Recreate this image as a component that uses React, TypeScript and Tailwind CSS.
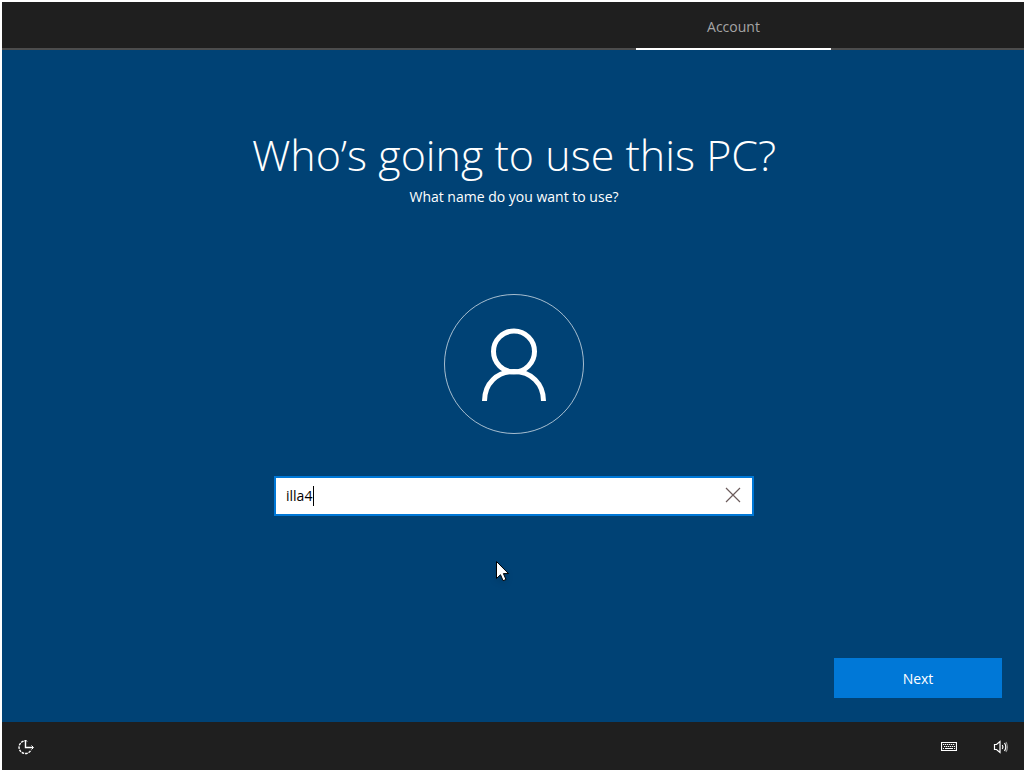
import { useState } from 'react';

function PersonIcon() {
    return (
        <svg className="w-[140px] h-[140px]" viewBox="0 0 140 140" fill="none" stroke="#fff" aria-hidden="true">
            <circle cx="70" cy="70" r="69.5" strokeWidth="1" strokeOpacity="0.65" />
            <circle cx="70" cy="57.5" r="20.5" strokeWidth="5" />
            <path d="M40.5 107C40.5 89.5 53 77.5 70 77.5S99.500 89.500 99.500 107" strokeWidth="5" />
        </svg>
    );
}

function EaseOfAccessIcon() {
    return (
        <svg className="w-[18px] h-[18px]" viewBox="0 0 18 18" fill="none" stroke="#fff" strokeWidth="1.4" aria-hidden="true">
            <path d="M6.500 3.200A6.300 6.300 0 1 0 14 12" strokeDasharray="2.600 0.900" />
            <path d="M8.500 2v7.500H16" />
            <path d="M7 3.500l1.500-1.500 1.500 1.500M14.500 7.500l2 2-2 2" strokeWidth="1" />
        </svg>
    );
}

function KeyboardIcon() {
    return (
        <svg className="w-4 h-4" viewBox="0 0 16 16" fill="none" stroke="#fff" aria-hidden="true">
            <path d="M0.500 3.500h15v8H0.500z" strokeWidth="1.200" />
            <path d="M2 5.500h12M3 7.500h11" strokeDasharray="1.300 0.700" />
            <path d="M2 9.500h1M4 9.500h8M13 9.500h1" />
        </svg>
    );
}

function VolumeIcon() {
    return (
        <svg className="w-4 h-4" viewBox="0 0 16 16" fill="none" stroke="#fff" strokeWidth="1.200" aria-hidden="true">
            <path d="M1.500 5.500h2l3.500-3v11l-3.500-3h-2z" />
            <path d="M9.300 6q1.400 2 0 4M11.500 4q2.600 4 0 8" />
            <path d="M13 3q2.800 5 0 10" strokeOpacity="0.5" />
        </svg>
    );
}

export default function App() {
    const [name, setName] = useState('illa4');

    return (
        <div className="min-h-screen flex flex-col border-y-2 border-l-2 border-white bg-[#004275] text-white font-['Open_Sans','Noto_Sans',sans-serif] text-sm">
            {/* Setup steps */}
            <header className="flex h-12 bg-[#1f1f1f]">
                <div className="flex-1 border-b-2 border-[#4c4c4c]" />
                <nav className="w-[195px] flex border-b-2 border-white">
                    <button className="flex-1 pt-1 text-[#a5a5a5]">Account</button>
                </nav>
                <div className="w-[193px] border-b-2 border-[#4c4c4c]" />
            </header>

            <main className="relative flex-1 flex flex-col items-center pl-[2px]">
                <h1 className="mt-[73px] text-[43px] leading-[64px] font-light">Who’s going to use this PC?</h1>
                <p className="leading-5">What name do you want to use?</p>

                <div className="mt-[87px]">
                    <PersonIcon />
                </div>

                {/* Name field */}
                <div className="relative mt-[42px] w-full max-w-[480px] h-10 flex items-center border-2 border-[#0078d7] bg-white">
                    <input
                        type="text"
                        aria-label="Name"
                        value={name}
                        onChange={e => setName(e.target.value)}
                        className="flex-1 h-full pl-[10px] pb-[2px] text-black caret-transparent outline-none"
                    />
                    <span className="absolute left-[37px] top-2 w-px h-5 bg-black" />
                    <button aria-label="Clear" onClick={() => setName('')} className="w-[38px] h-full pb-[2px] flex items-center justify-center">
                        <svg className="w-4 h-4" viewBox="0 0 16 16" fill="none" stroke="#6b5b5b" strokeWidth="1.200">
                            <path d="M1 1l14 14M15 1L1 15" />
                        </svg>
                    </button>
                </div>

                <button className="mt-auto mb-6 mr-[22px] self-end w-[168px] h-10 pt-[2px] bg-[#0078d7]">Next</button>

                {/* Mouse pointer */}
                <svg className="absolute left-[494px] top-[511px] w-4 h-6 drop-shadow-md pointer-events-none" viewBox="0 0 16 24" aria-hidden="true">
                    <path d="M0.500 0.500v17l4-3.800 2.600 6 2.900-1.200-2.600-5.900h5.100z" fill="#fff" stroke="#000" />
                </svg>
            </main>

            <footer className="h-12 flex items-center bg-[#1f1f1f] pt-[2px] px-[15px]">
                <button aria-label="Ease of access">
                    <EaseOfAccessIcon />
                </button>
                <button aria-label="Keyboard" className="ml-auto">
                    <KeyboardIcon />
                </button>
                <button aria-label="Volume" className="ml-9">
                    <VolumeIcon />
                </button>
            </footer>
        </div>
    );
}
